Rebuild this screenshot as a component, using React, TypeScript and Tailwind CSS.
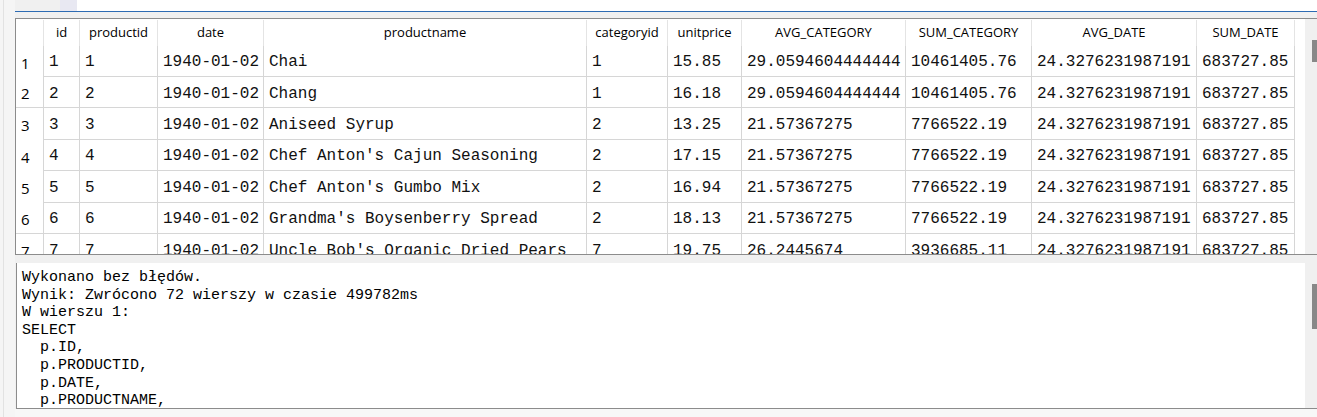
import React from "react";

const cols = [
  { name: "id", w: "w-[36px]" },
  { name: "productid", w: "w-[78px]" },
  { name: "date", w: "w-[106px]" },
  { name: "productname", w: "w-[323px]" },
  { name: "categoryid", w: "w-[81px]" },
  { name: "unitprice", w: "w-[74px]" },
  { name: "AVG_CATEGORY", w: "w-[164px]" },
  { name: "SUM_CATEGORY", w: "w-[126px]" },
  { name: "AVG_DATE", w: "w-[165px]" },
  { name: "SUM_DATE", w: "w-[98px]" },
];

const rows: string[][] = [
  ["1", "1", "1940-01-02", "Chai", "1", "15.85", "29.0594604444444", "10461405.76", "24.3276231987191", "683727.85"],
  ["2", "2", "1940-01-02", "Chang", "1", "16.18", "29.0594604444444", "10461405.76", "24.3276231987191", "683727.85"],
  ["3", "3", "1940-01-02", "Aniseed Syrup", "2", "13.25", "21.57367275", "7766522.19", "24.3276231987191", "683727.85"],
  ["4", "4", "1940-01-02", "Chef Anton's Cajun Seasoning", "2", "17.15", "21.57367275", "7766522.19", "24.3276231987191", "683727.85"],
  ["5", "5", "1940-01-02", "Chef Anton's Gumbo Mix", "2", "16.94", "21.57367275", "7766522.19", "24.3276231987191", "683727.85"],
  ["6", "6", "1940-01-02", "Grandma's Boysenberry Spread", "2", "18.13", "21.57367275", "7766522.19", "24.3276231987191", "683727.85"],
  ["7", "7", "1940-01-02", "Uncle Bob's Organic Dried Pears", "7", "19.75", "26.2445674", "3936685.11", "24.3276231987191", "683727.85"],
];

const messages = [
  "Wykonano bez błędów.",
  "Wynik: Zwrócono 72 wierszy w czasie 499782ms",
  "W wierszu 1:",
  "SELECT",
  "  p.ID,",
  "  p.PRODUCTID,",
  "  p.DATE,",
  "  p.PRODUCTNAME,",
];

export default function App() {
  return (
    <div className="w-[1317px] h-[417px] overflow-hidden flex bg-[#f0f0f0] text-black">
      {/* left strip */}
      <div className="w-[15px] h-full flex shrink-0 bg-[#f5f5f5]">
        <div className="w-[4px] h-full border-r border-[#e2e2e2]" />
      </div>

      {/* main */}
      <div className="flex-1 flex flex-col min-w-0">
        {/* top tabs strip */}
        <div className="h-[12px] flex border-b border-[#2d6bb3] shrink-0">
          <div className="w-[45px] bg-[#f0f0f0]" />
          <div className="w-[17px] bg-[#e8e8f2]" />
          <div className="flex-1 bg-white" />
        </div>
        <div className="h-[6px] shrink-0" />

        {/* table frame */}
        <div className="h-[237px] shrink-0 border-l border-t border-b border-[#8c8c8c] bg-white flex overflow-hidden">
          <div className="flex-1 flex flex-col overflow-hidden" style={{ fontFamily: "'Open Sans', 'Liberation Sans', sans-serif" }}>
            {/* header */}
            <div className="h-[26.6px] shrink-0 flex text-[13px] pt-[1px]">
              <div className="w-[28px] border-r border-[#e4e4e4]" />
              {cols.map((c) => (
                <div key={c.name} className={`${c.w} shrink-0 border-r border-[#e4e4e4] flex items-center justify-center`}>
                  {c.name}
                </div>
              ))}
            </div>
            {/* rows */}
            {rows.map((r, i) => (
              <div key={i} className="h-[31.4px] shrink-0 flex">
                <div
                  className={`w-[28px] shrink-0 border-r border-[#d6d6d6] flex items-center pl-[5px] pt-[3px] text-[15px] ${
                    i === 1 || i === 5 ? "border-b" : ""
                  }`}
                >
                  {i + 1}
                </div>
                {cols.map((c, j) => (
                  <div
                    key={c.name}
                    className={`${c.w} shrink-0 border-r border-b border-[#d6d6d6] flex items-center pl-[5px] pt-[3px] whitespace-nowrap overflow-hidden text-[16px] text-[#111]`}
                    style={{ fontFamily: "'Liberation Mono', 'Courier New', monospace" }}
                  >
                    {r[j]}
                  </div>
                ))}
              </div>
            ))}
          </div>
          {/* scrollbar */}
          <div className="w-[12px] shrink-0 bg-[#f0f0f0] flex flex-col">
            <div className="h-[21px]" />
            <div className="h-[22px] ml-[7px] bg-[#888888]" />
          </div>
        </div>

        <div className="h-[8px] shrink-0" />

        {/* message panel */}
        <div className="h-[146px] shrink-0 ml-[1px] border-l border-b border-[#8c8c8c] bg-white flex overflow-hidden">
          <div
            className="flex-1 pl-[5px] pt-[6px] text-[15px] leading-[17.6px] whitespace-pre text-black"
            style={{ fontFamily: "'Liberation Mono', 'Courier New', monospace" }}
          >
            {messages.map((m, i) => (
              <div key={i}>{m}</div>
            ))}
          </div>
          <div className="w-[12px] shrink-0 bg-[#f0f0f0] flex flex-col">
            <div className="h-[21px]" />
            <div className="h-[45px] ml-[7px] bg-[#888888]" />
          </div>
        </div>

        <div className="flex-1 bg-[#f7f7f7]" />
      </div>
    </div>
  );
}
